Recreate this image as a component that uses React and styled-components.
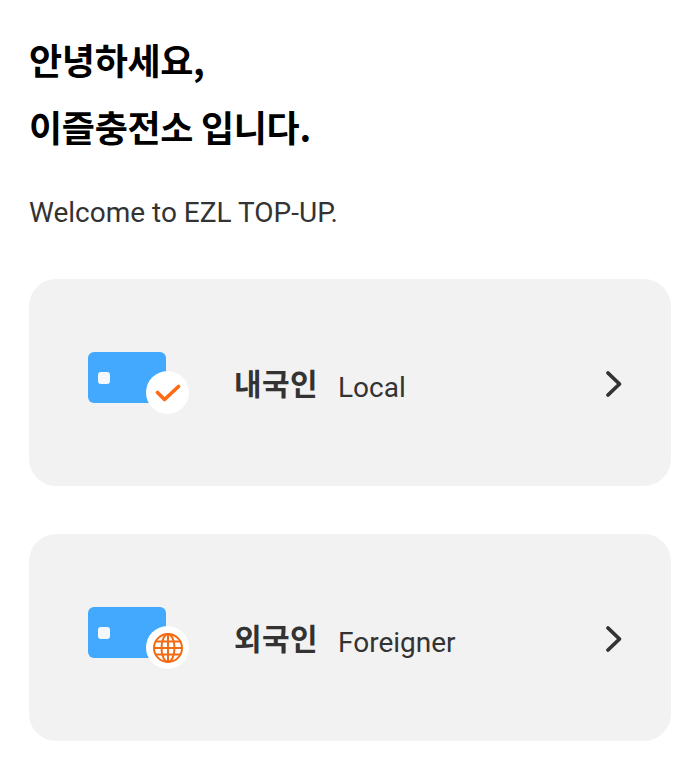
import React from "react";
import styled, { createGlobalStyle } from "styled-components";

const GlobalStyle = createGlobalStyle`
  html, body {
    margin: 0;
    padding: 0;
    background: #fff;
  }
  body {
    font-family: Roboto, "Noto Sans CJK KR", sans-serif;
  }
`;

const Page = styled.div`
  width: 700px;
  height: 784px;
  box-sizing: border-box;
  padding: 26px 29px 0;
  overflow: hidden;
`;

const Title = styled.h1`
  margin: 0;
  font-family: "Noto Sans CJK KR", sans-serif;
  font-size: 36px;
  font-weight: 700;
  line-height: 67px;
  letter-spacing: -0.3px;
  color: #000;
`;

const Subtitle = styled.p`
  margin: 33px 0 46px;
  font-size: 28px;
  line-height: 40px;
  color: #333;
`;

const CardList = styled.div`
  display: flex;
  flex-direction: column;
  gap: 48px;
`;

const Card = styled.div`
  display: flex;
  align-items: center;
  height: 207px;
  box-sizing: border-box;
  padding: 0 48px 0 59px;
  background: #f2f2f2;
  border-radius: 27px;
`;

const IconWrap = styled.div`
  position: relative;
  width: 78px;
  height: 51px;
  margin: 0 68px 10px 0;
  flex-shrink: 0;
`;

const BankCard = styled.div`
  width: 78px;
  height: 51px;
  background: #42a9ff;
  border-radius: 6px;
`;

const Chip = styled.div`
  position: absolute;
  left: 10px;
  top: 20px;
  width: 12px;
  height: 12px;
  background: #f4f8fc;
  border-radius: 3px;
`;

const Badge = styled.div`
  position: absolute;
  left: 58px;
  top: 19px;
  width: 43px;
  height: 43px;
  display: flex;
  align-items: center;
  justify-content: center;
  background: #fff;
  border-radius: 50%;
`;

const Labels = styled.div`
  flex: 1;
  display: flex;
  align-items: center;
  gap: 20px;
  height: 44px;
  margin-bottom: 2px;
`;

const KoLabel = styled.span`
  font-family: "Noto Sans CJK KR", sans-serif;
  font-size: 30px;
  font-weight: 700;
  letter-spacing: 0.4px;
  color: #333;
`;

const EnLabel = styled.span`
  margin-top: 12px;
  font-size: 28px;
  color: #333;
`;

const Chevron = styled.svg`
  width: 18px;
  height: 28px;
  margin-top: 3px;
  flex-shrink: 0;
`;

const CheckIcon = () => (
  <svg width="26" height="20" viewBox="0 0 26 20" fill="none">
    <path
      d="M2.5 9.5 L9.5 16.5 L23.5 3.5"
      stroke="#ff6a13"
      strokeWidth="3.6"
      strokeLinecap="round"
      strokeLinejoin="round"
    />
  </svg>
);

const GlobeIcon = () => (
  <svg width="32" height="32" viewBox="0 0 32 32" fill="none" stroke="#f26a12" strokeWidth="2">
    <circle cx="16" cy="16" r="14" />
    <ellipse cx="16" cy="16" rx="6.5" ry="14" />
    <path d="M16 2 V30 M4 9.5 H28 M4 22.5 H28 M2 16 H30" />
  </svg>
);

const ChevronIcon = () => (
  <Chevron viewBox="0 0 18 28" fill="none">
    <path
      d="M3 3 L14.5 14 L3 25"
      stroke="#333"
      strokeWidth="3.8"
      strokeLinecap="round"
      strokeLinejoin="round"
    />
  </Chevron>
);

const options = [
  { ko: "내국인", en: "Local", icon: <CheckIcon /> },
  { ko: "외국인", en: "Foreigner", icon: <GlobeIcon /> },
];

const App = () => (
  <Page>
    <GlobalStyle />
    <Title>
      안녕하세요,
      <br />
      이즐충전소 입니다.
    </Title>
    <Subtitle>Welcome to EZL TOP-UP.</Subtitle>
    <CardList>
      {options.map((option) => (
        <Card key={option.en}>
          <IconWrap>
            <BankCard />
            <Chip />
            <Badge>{option.icon}</Badge>
          </IconWrap>
          <Labels>
            <KoLabel>{option.ko}</KoLabel>
            <EnLabel>{option.en}</EnLabel>
          </Labels>
          <ChevronIcon />
        </Card>
      ))}
    </CardList>
  </Page>
);

export default App;
